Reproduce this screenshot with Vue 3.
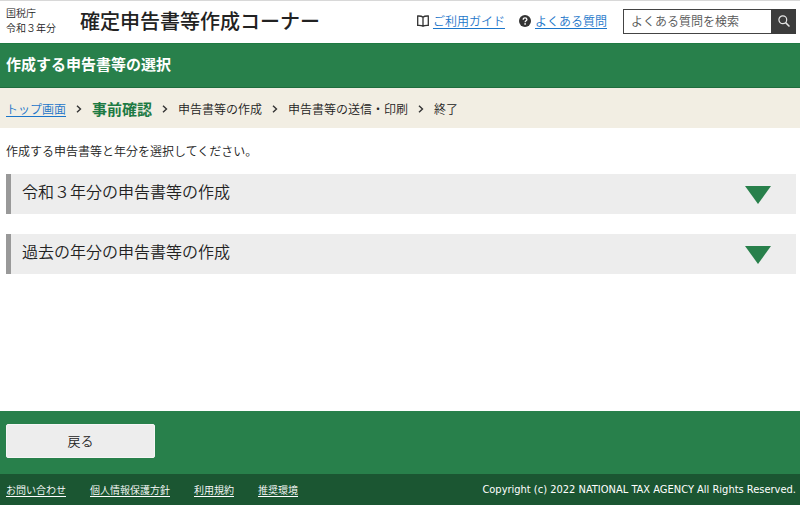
<script setup>
import { ref } from 'vue'

const query = ref('')
const steps = ['申告書等の作成', '申告書等の送信・印刷', '終了']
const sections = ref([
  { title: '令和３年分の申告書等の作成', open: false },
  { title: '過去の年分の申告書等の作成', open: false },
])
const footerLinks = ['お問い合わせ', '個人情報保護方針', '利用規約', '推奨環境']
</script>

<template>
  <div class="page">
    <header class="header">
      <p class="agency">国税庁<br />令和３年分</p>
      <h1 class="site-title">確定申告書等作成コーナー</h1>
      <nav class="help">
        <a class="help-link" href="#guide">
          <svg class="icon-help" viewBox="0 0 12 12" aria-hidden="true">
            <path d="M6 2.200C5 1.200 3.200 .9 .7 1v9.300c2.300-.1 4.300 .1 5.300 .9 1-.8 3-1 5.300-.9V1C8.800 .9 7 1.200 6 2.200zM6 2.200v9" fill="none" stroke="#333" stroke-width="1.300" />
          </svg>
          <span>ご利用ガイド</span>
        </a>
        <a class="help-link" href="#faq">
          <svg class="icon-help" viewBox="0 0 12 12" aria-hidden="true">
            <circle cx="6" cy="6" r="6" fill="#333" />
            <path d="M4.200 4.700C4.200 3.500 5 2.900 6 2.900s1.900 .6 1.900 1.600C7.900 5.700 6.100 5.800 6.100 7.200" fill="none" stroke="#fff" stroke-width="1.300" />
            <circle cx="6.100" cy="8.900" r=".85" fill="#fff" />
          </svg>
          <span>よくある質問</span>
        </a>
      </nav>
      <form class="search" role="search" @submit.prevent>
        <input v-model="query" class="search-input" type="text" aria-label="よくある質問を検索" placeholder="よくある質問を検索" />
        <button class="search-button" type="submit" aria-label="検索">
          <svg class="icon-search" viewBox="0 0 12 12" aria-hidden="true">
            <circle cx="4.800" cy="4.800" r="3.900" fill="none" stroke="#e6e6e6" stroke-width="1.200" />
            <path d="M7.600 7.600L11.500 11.500" stroke="#e6e6e6" stroke-width="1.500" />
          </svg>
        </button>
      </form>
    </header>

    <h2 class="page-title">作成する申告書等の選択</h2>

    <nav aria-label="手順">
      <ol class="steps">
        <li class="step"><a href="#top">トップ画面</a></li>
        <li class="step current" aria-current="step">
          <svg class="chevron" viewBox="0 0 6 8" aria-hidden="true"><path d="M1 .7L4.500 4 1 7.300" /></svg>
          事前確認
        </li>
        <li v-for="step in steps" :key="step" class="step">
          <svg class="chevron" viewBox="0 0 6 8" aria-hidden="true"><path d="M1 .7L4.500 4 1 7.300" /></svg>
          {{ step }}
        </li>
      </ol>
    </nav>

    <main class="main">
      <p class="intro">作成する申告書等と年分を選択してください。</p>
      <div class="sections">
        <button
          v-for="section in sections"
          :key="section.title"
          class="section"
          type="button"
          :aria-expanded="section.open"
          @click="section.open = !section.open"
        >
          <span class="section-title">{{ section.title }}</span>
          <svg class="triangle" viewBox="0 0 26 18" aria-hidden="true"><path d="M0 0h26L13 18z" fill="#28804b" /></svg>
        </button>
      </div>
    </main>

    <div class="actions">
      <button class="back" type="button">戻る</button>
    </div>

    <footer class="footer">
      <nav class="footer-links">
        <a v-for="link in footerLinks" :key="link" href="#info">{{ link }}</a>
      </nav>
      <small class="copyright">Copyright (c) 2022 NATIONAL TAX AGENCY All Rights Reserved.</small>
    </footer>
  </div>
</template>

<style>
body {
  margin: 0;
}
</style>

<style scoped>
.page {
  display: flex;
  flex-direction: column;
  min-height: 100vh;
  box-sizing: border-box;
  border-top: 1px solid #d8d8d8;
  background: #fff;
  color: #222;
  font-family: "Noto Sans CJK JP", sans-serif;
  font-size: 12px;
  font-weight: 350;
  line-height: 16px;
}
.page * {
  box-sizing: border-box;
}
a {
  color: #1b75c9;
  text-decoration: underline;
  text-underline-offset: 2px;
}
button,
input {
  font-family: inherit;
  font-weight: inherit;
  border-radius: 0;
}
.header {
  display: flex;
  align-items: center;
  height: 42px;
  padding: 0 4px 2px 6px;
}
.agency {
  width: 74px;
  margin: 0;
  padding-bottom: 2px;
  font-size: 10px;
  line-height: 15px;
}
.site-title {
  flex: 1;
  margin: 0;
  font-size: 20px;
  font-weight: 500;
  line-height: 28px;
  white-space: nowrap;
}
.help {
  display: flex;
  gap: 14px;
  margin-right: 16px;
}
.help-link {
  display: flex;
  align-items: center;
  gap: 4px;
  text-decoration: none;
  white-space: nowrap;
}
.help-link span {
  text-decoration: underline;
}
.icon-help,
.icon-search {
  width: 12px;
  height: 12px;
}
.search {
  display: flex;
  width: 173px;
  height: 25px;
}
.search-input {
  flex: 1;
  min-width: 0;
  padding: 0 7px 2px;
  border: 1px solid #444;
  border-right: 0;
  background: #fff;
  font-size: 12px;
}
.search-input::placeholder {
  color: #555;
  opacity: 1;
}
.search-button {
  display: flex;
  align-items: center;
  justify-content: center;
  width: 25px;
  padding: 0;
  border: 0;
  background: #3c3c3c;
}
.page-title {
  margin: 0;
  padding: 9px 6px 12px;
  border-bottom: 1px solid #1f6c3d;
  border-top: 1px solid #1f7a43;
  background: #28804b;
  color: #fff;
  font-size: 15px;
  font-weight: 700;
  line-height: 22px;
}
.steps {
  display: flex;
  align-items: center;
  height: 40px;
  margin: 0;
  padding: 2px 6px 0;
  background: #f2eee3;
  list-style: none;
}
.step {
  display: flex;
  align-items: center;
  white-space: nowrap;
}
.current {
  color: #1d7a43;
  font-size: 15px;
  font-weight: 700;
}
.chevron {
  width: 6px;
  height: 8px;
  margin: 0 10px;
  fill: none;
  stroke: #333;
  stroke-width: 1.4;
}
.main {
  flex: 1;
  padding: 15px 4px 16px 6px;
}
.intro {
  margin: 0 0 15px;
}
.sections {
  display: flex;
  flex-direction: column;
  gap: 20px;
}
.section {
  display: flex;
  align-items: center;
  justify-content: space-between;
  height: 40px;
  padding: 2px 25px 0 11px;
  border: 0;
  border-left: 5px solid #999;
  background: #ededed;
  color: #222;
  font-size: 16px;
  text-align: left;
}
.section-title {
  padding-bottom: 8px;
}
.triangle {
  width: 26px;
  height: 18px;
}
.actions {
  padding: 13px 6px 16px;
  background: #28804b;
}
.back {
  display: block;
  width: 149px;
  height: 34px;
  padding: 0 0 2px;
  border: 1px solid #f6f6f6;
  border-radius: 2px;
  background: #ededed;
  color: #222;
  font-size: 13px;
}
.footer {
  display: flex;
  align-items: center;
  justify-content: space-between;
  height: 31px;
  padding: 0 4px 0 6px;
  background: #1b5632;
  color: #fff;
}
.footer-links {
  display: flex;
  gap: 24px;
  font-size: 10px;
}
.footer-links a {
  color: #fff;
}
.copyright {
  font-family: "DejaVu Sans Condensed", "DejaVu Sans", sans-serif;
  font-size: 11px;
}
</style>
